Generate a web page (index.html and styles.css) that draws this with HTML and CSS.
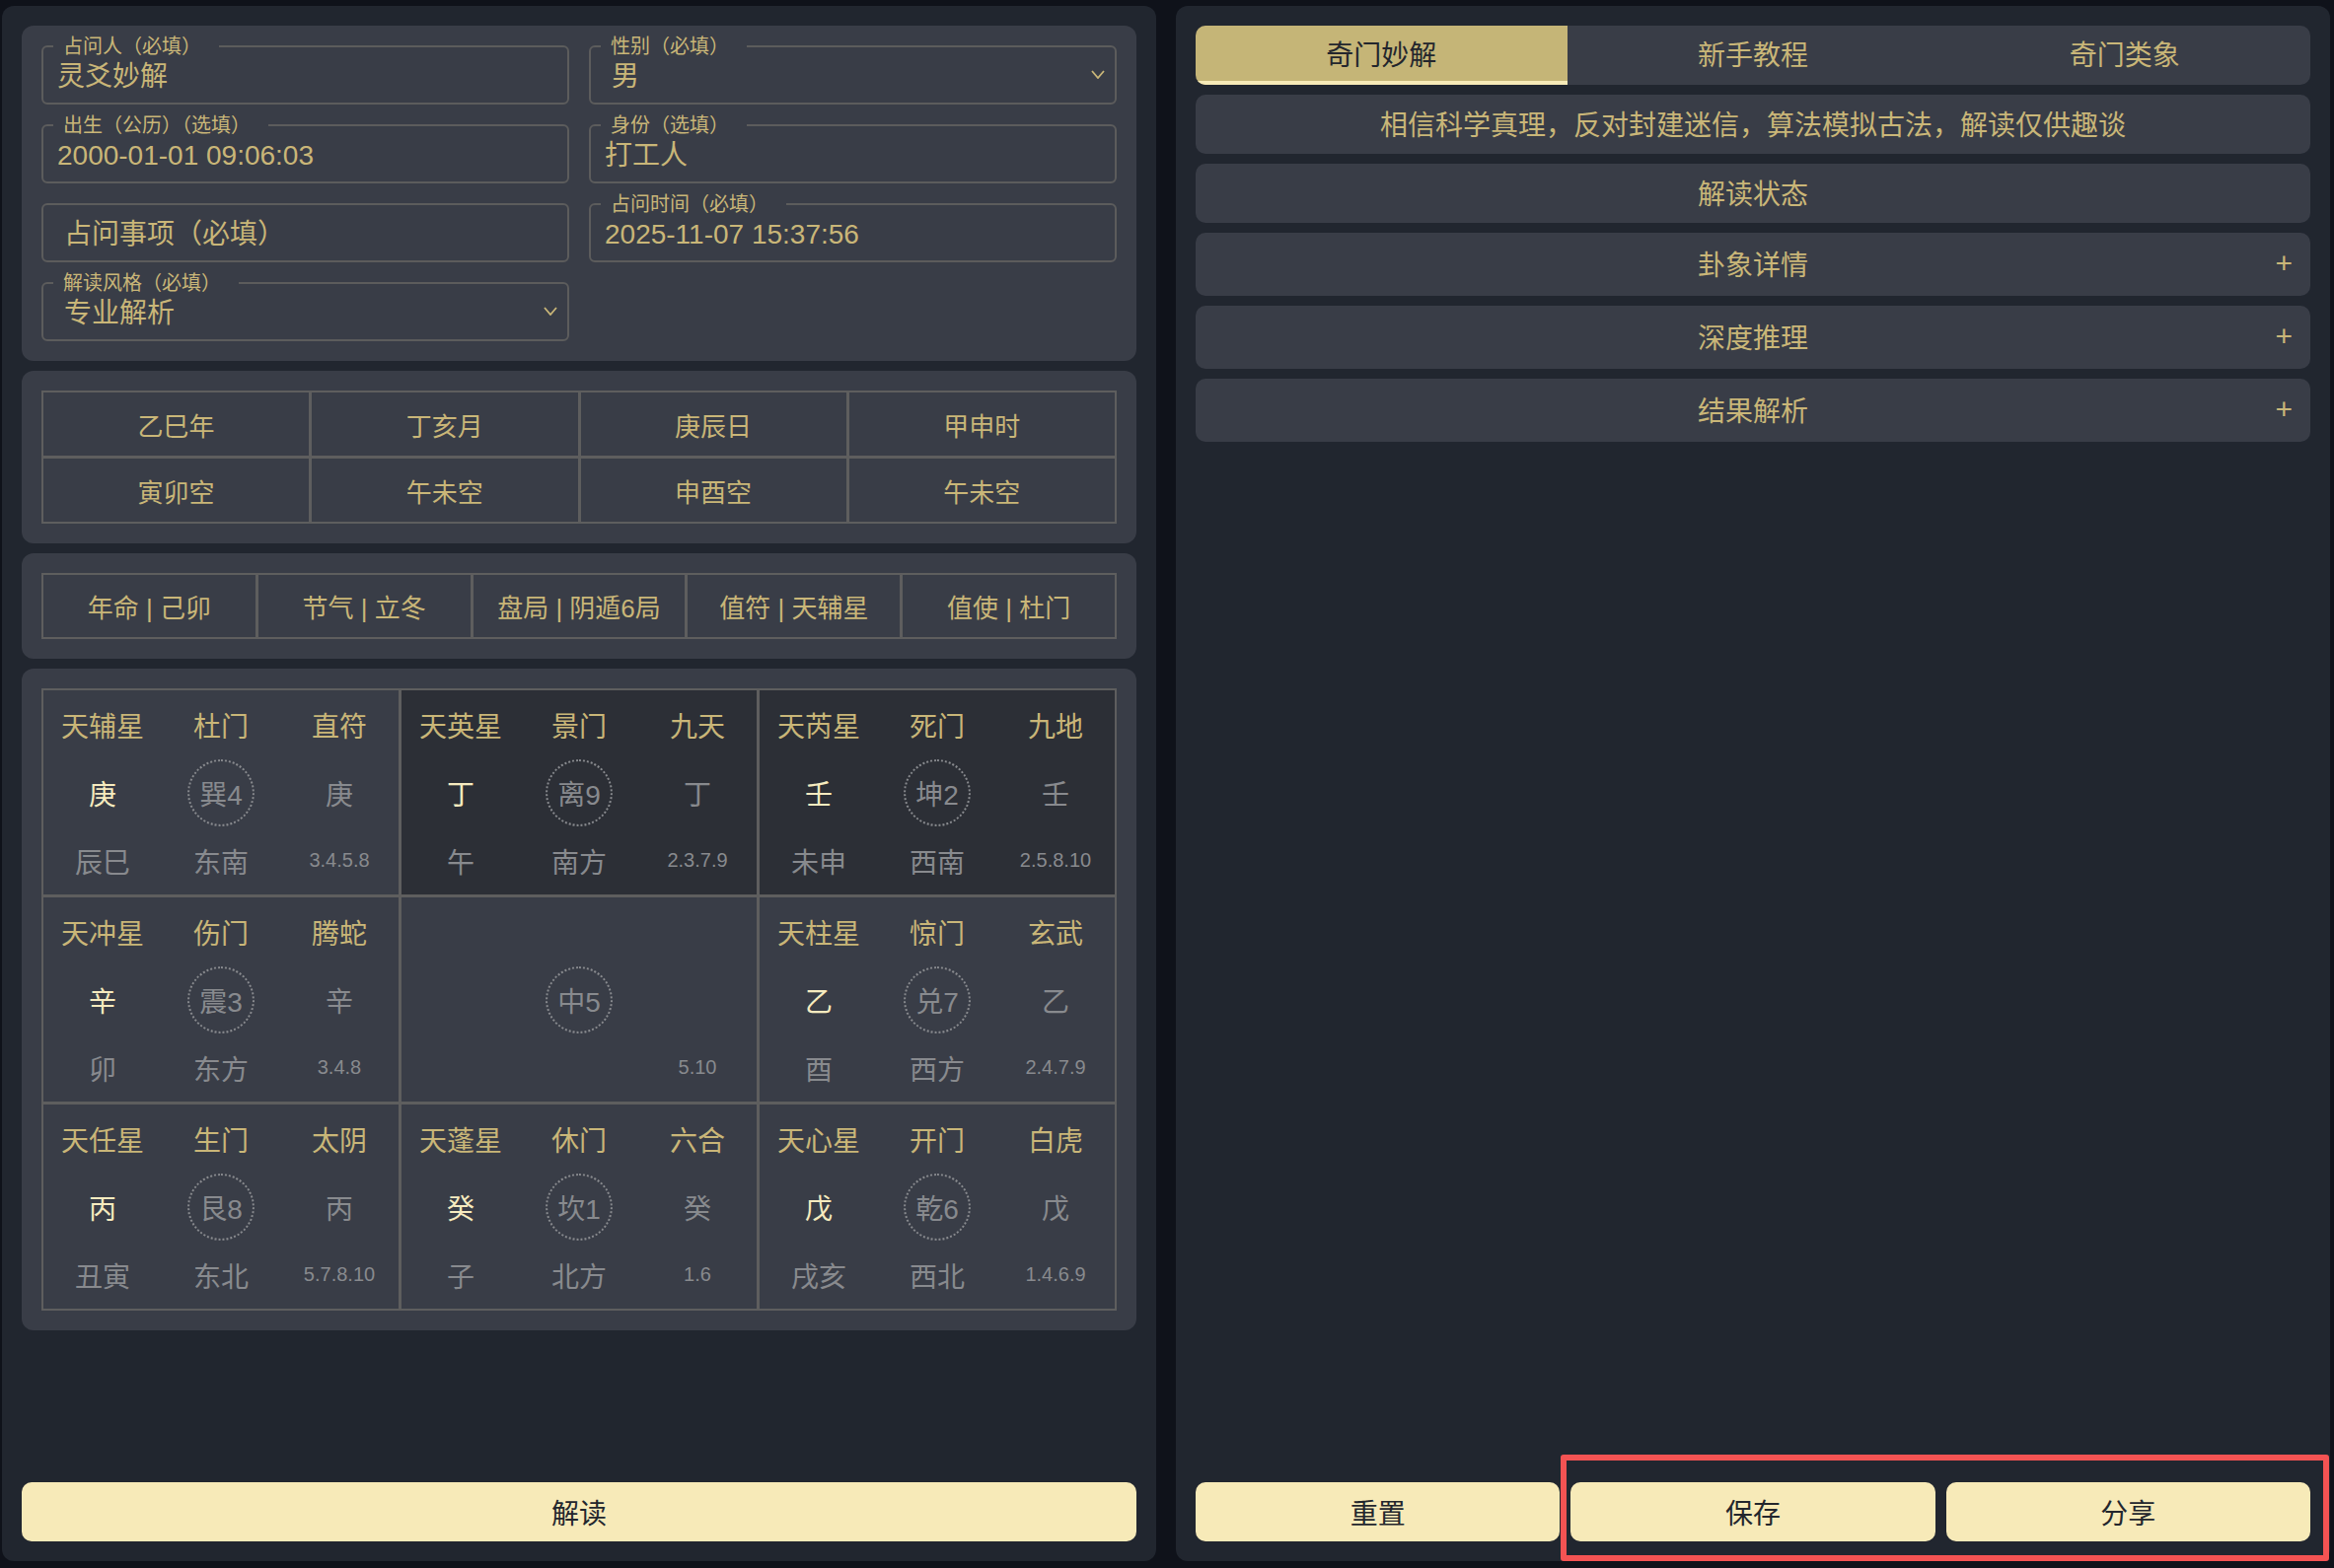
FILE: index.html
```html
<!DOCTYPE html>
<html lang="zh-CN">
<head>
    <meta charset="UTF-8">
    <meta name="viewport" content="width=device-width, initial-scale=1.0">
    <title>奇门妙解</title>
    <link rel="stylesheet" href="styles.css">
</head>
<body>
    <div class="app">
        <section class="panel">
            <div class="card form-card">
                <div class="field">
                    <span class="field-label">占问人（必填）</span>
                    <span class="field-value">灵爻妙解</span>
                </div>
                <div class="field select">
                    <span class="field-label">性别（必填）</span>
                    <span class="field-value">男</span>
                    <svg class="chevron" viewBox="0 0 14 9"><polyline points="1,1 7,8 13,1"/></svg>
                </div>
                <div class="field">
                    <span class="field-label">出生（公历）（选填）</span>
                    <span class="field-value">2000-01-01 09:06:03</span>
                </div>
                <div class="field">
                    <span class="field-label">身份（选填）</span>
                    <span class="field-value">打工人</span>
                </div>
                <div class="field">
                    <span class="field-value placeholder">占问事项（必填）</span>
                </div>
                <div class="field">
                    <span class="field-label">占问时间（必填）</span>
                    <span class="field-value">2025-11-07 15:37:56</span>
                </div>
                <div class="field select">
                    <span class="field-label">解读风格（必填）</span>
                    <span class="field-value">专业解析</span>
                    <svg class="chevron" viewBox="0 0 14 9"><polyline points="1,1 7,8 13,1"/></svg>
                </div>
            </div>

            <div class="card">
                <div class="line-table pillars">
                    <div class="line-cell">乙巳年</div>
                    <div class="line-cell">丁亥月</div>
                    <div class="line-cell">庚辰日</div>
                    <div class="line-cell">甲申时</div>
                    <div class="line-cell">寅卯空</div>
                    <div class="line-cell">午未空</div>
                    <div class="line-cell">申酉空</div>
                    <div class="line-cell">午未空</div>
                </div>
            </div>

            <div class="card">
                <div class="line-table facts">
                    <div class="line-cell">年命 | 己卯</div>
                    <div class="line-cell">节气 | 立冬</div>
                    <div class="line-cell">盘局 | 阴遁6局</div>
                    <div class="line-cell">值符 | 天辅星</div>
                    <div class="line-cell">值使 | 杜门</div>
                </div>
            </div>

            <div class="card">
                <div class="palace-grid" id="palaceGrid"></div>
            </div>

            <button class="action-btn read-btn">解读</button>
        </section>

        <section class="panel">
            <div class="tabs">
                <div class="tab active">奇门妙解</div>
                <div class="tab">新手教程</div>
                <div class="tab">奇门类象</div>
            </div>
            <div class="bar">相信科学真理，反对封建迷信，算法模拟古法，解读仅供趣谈</div>
            <div class="bar">解读状态</div>
            <div class="bar fold"><span></span><span>卦象详情</span><span class="plus">+</span></div>
            <div class="bar fold"><span></span><span>深度推理</span><span class="plus">+</span></div>
            <div class="bar fold"><span></span><span>结果解析</span><span class="plus">+</span></div>

            <div class="actions">
                <button class="action-btn">重置</button>
                <button class="action-btn">保存</button>
                <button class="action-btn">分享</button>
                <div class="highlight"></div>
            </div>
        </section>
    </div>

    <script>
        // 九宫数据：星、门、神 / 天干、宫位、地干 / 地支、方位、数字
        const palaces = [
            { top: ['天辅星', '杜门', '直符'], stem: '庚', gua: '巽4', bottom: ['辰巳', '东南', '3.4.5.8'] },
            { top: ['天英星', '景门', '九天'], stem: '丁', gua: '离9', bottom: ['午', '南方', '2.3.7.9'], dark: true },
            { top: ['天芮星', '死门', '九地'], stem: '壬', gua: '坤2', bottom: ['未申', '西南', '2.5.8.10'], dark: true },
            { top: ['天冲星', '伤门', '腾蛇'], stem: '辛', gua: '震3', bottom: ['卯', '东方', '3.4.8'] },
            { top: ['', '', ''], stem: '', gua: '中5', bottom: ['', '', '5.10'] },
            { top: ['天柱星', '惊门', '玄武'], stem: '乙', gua: '兑7', bottom: ['酉', '西方', '2.4.7.9'] },
            { top: ['天任星', '生门', '太阴'], stem: '丙', gua: '艮8', bottom: ['丑寅', '东北', '5.7.8.10'] },
            { top: ['天蓬星', '休门', '六合'], stem: '癸', gua: '坎1', bottom: ['子', '北方', '1.6'] },
            { top: ['天心星', '开门', '白虎'], stem: '戊', gua: '乾6', bottom: ['戌亥', '西北', '1.4.6.9'] }
        ];

        const grid = document.getElementById('palaceGrid');
        palaces.forEach(p => {
            const cell = document.createElement('div');
            cell.className = 'palace' + (p.dark ? ' dark' : '');
            cell.innerHTML =
                p.top.map(t => `<span class="gold">${t}</span>`).join('') +
                `<span class="stem">${p.stem}</span>` +
                `<span><span class="gua">${p.gua}</span></span>` +
                `<span class="muted">${p.stem}</span>` +
                `<span class="muted">${p.bottom[0]}</span>` +
                `<span class="muted">${p.bottom[1]}</span>` +
                `<span class="muted num">${p.bottom[2]}</span>`;
            grid.appendChild(cell);
        });
    </script>
</body>
</html>
```

FILE: styles.css
```css
body {
    margin: 0;
    background-color: #0f121a;
    font-family: "Liberation Sans", "Noto Sans CJK SC", sans-serif;
    color: #c9b678;
}
.app {
    display: flex;
    gap: 20px;
    height: 100vh;
    padding: 6px 4px 7px 2px;
    box-sizing: border-box;
}
.panel {
    flex: 1;
    display: flex;
    flex-direction: column;
    gap: 10px;
    padding: 20px;
    background-color: #21262f;
    border-radius: 12px;
}
.card {
    background-color: #393d47;
    border-radius: 12px;
    padding: 20px;
}

/* 表单 */
.form-card {
    display: grid;
    grid-template-columns: 1fr 1fr;
    gap: 20px;
}
.field {
    position: relative;
    height: 60px;
    border: 2px solid #5c5c5c;
    border-radius: 6px;
    box-sizing: border-box;
    display: flex;
    align-items: center;
    padding-left: 14px;
    padding-top: 4px;
}
.field.select {
    padding-left: 21px;
}
.field-label {
    position: absolute;
    top: -13px;
    left: 10px;
    padding: 0 18px 0 10px;
    font-size: 20px;
    line-height: 24px;
    background-color: #393d47;
}
.field-value {
    font-size: 28px;
    line-height: 36px;
}
.field-value.placeholder {
    padding-left: 7px;
}
.chevron {
    position: absolute;
    right: 10px;
    top: 23px;
    width: 14px;
    height: 9px;
    fill: none;
    stroke: #c9b678;
    stroke-width: 1.8;
}

/* 四柱 / 信息 */
.line-table {
    display: grid;
    gap: 3px;
    padding: 2px;
    background-color: #5e5e5e;
}
.pillars {
    grid-template-columns: repeat(4, 1fr);
    grid-auto-rows: 64px;
}
.facts {
    grid-template-columns: repeat(5, 1fr);
    grid-auto-rows: 63px;
}
.line-cell {
    background-color: #393d47;
    display: flex;
    justify-content: center;
    align-items: center;
    font-size: 26px;
}

/* 九宫 */
.palace-grid {
    display: grid;
    grid-template-columns: repeat(3, 1fr);
    grid-auto-rows: 207px;
    gap: 3px;
    padding: 2px;
    background-color: #5e5e5e;
}
.palace {
    background-color: #393d47;
    display: grid;
    grid-template-columns: repeat(3, 1fr);
    grid-template-rows: repeat(3, 69px);
    align-items: center;
    justify-items: center;
    font-size: 28px;
}
.palace.dark {
    background-color: #2c2f36;
}
.stem {
    color: #f6ebbf;
}
.muted {
    color: #888a8e;
}
.num {
    font-size: 20px;
}
.gua {
    display: flex;
    justify-content: center;
    align-items: center;
    width: 68px;
    height: 68px;
    box-sizing: border-box;
    border: 2px dotted #888a8e;
    border-radius: 50%;
    color: #888a8e;
}

/* 按钮 */
.action-btn {
    height: 60px;
    border: none;
    border-radius: 10px;
    background-color: #f7eab8;
    color: #23262d;
    font-family: inherit;
    font-size: 28px;
    cursor: pointer;
}
.read-btn {
    margin-top: auto;
}

/* 右侧 */
.tabs {
    display: grid;
    grid-template-columns: repeat(3, 1fr);
    height: 60px;
    border-radius: 10px;
    overflow: hidden;
    background-color: #393d47;
}
.tab {
    display: flex;
    justify-content: center;
    align-items: center;
    font-size: 28px;
    box-sizing: border-box;
    border-bottom: 4px solid transparent;
}
.tab.active {
    background-color: #c5b577;
    color: #23262d;
    border-bottom-color: #f7eab8;
}
.bar {
    height: 60px;
    border-radius: 10px;
    background-color: #393d47;
    display: flex;
    justify-content: center;
    align-items: center;
    font-size: 28px;
    box-sizing: border-box;
    padding-bottom: 2px;
}
.bar.fold {
    height: 64px;
    display: grid;
    grid-template-columns: 1fr auto 1fr;
    padding: 0 18px 2px;
}
.plus {
    justify-self: end;
    font-size: 30px;
    line-height: 1;
}
.actions {
    position: relative;
    margin-top: auto;
    display: grid;
    grid-template-columns: repeat(3, 1fr);
    gap: 11px;
}
.highlight {
    position: absolute;
    left: 370px;
    right: -19px;
    top: -28px;
    bottom: -20px;
    border: 6px solid #f45353;
    border-radius: 3px;
    pointer-events: none;
}
```
